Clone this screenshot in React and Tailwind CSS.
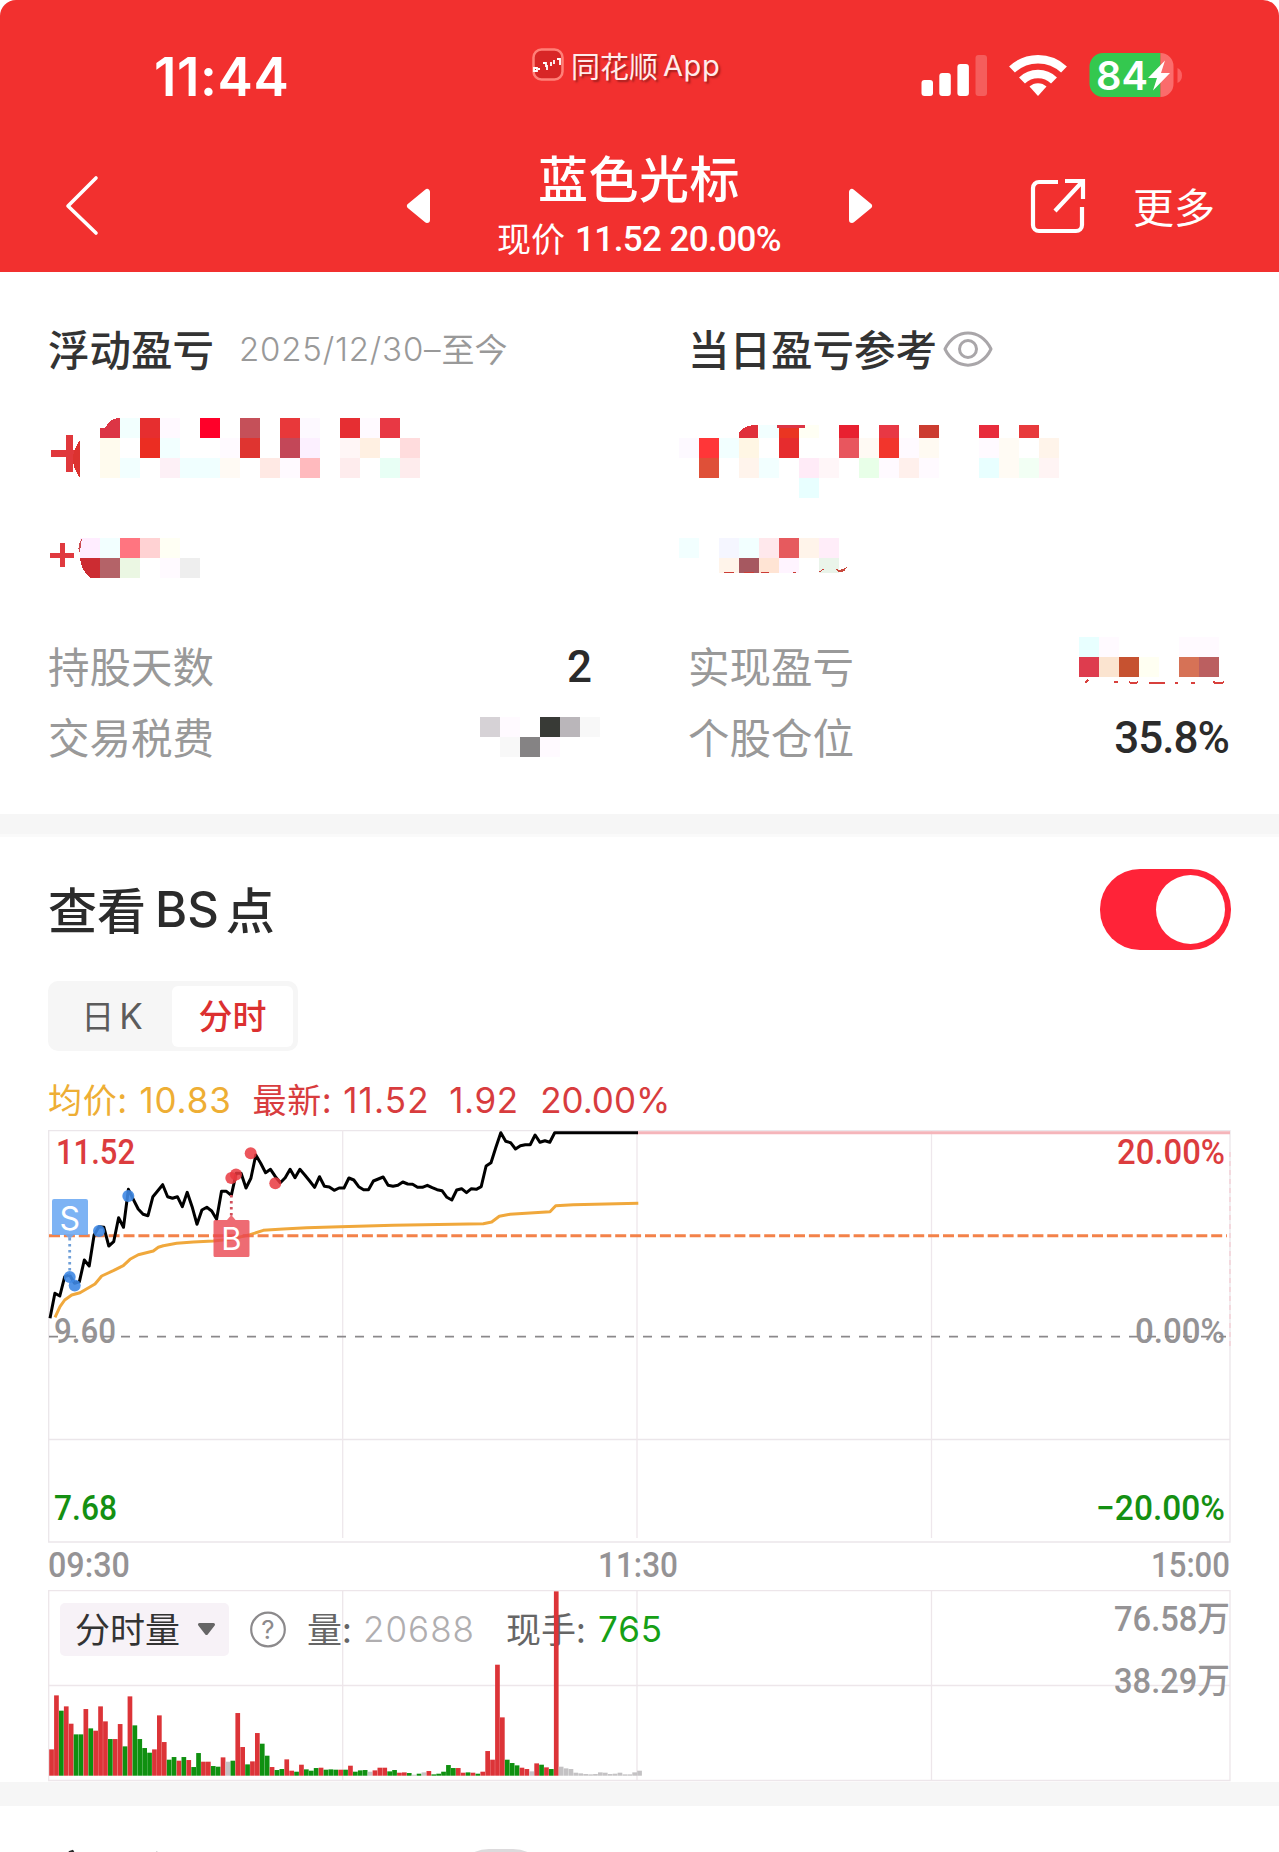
import { useState } from 'react'

const RED = '#dc3c3e'
const GREEN = '#149012'

// hidden amounts, one string of colours per 20px row ('-' leaves the cell empty)
const MASKS = {
  floatProfit: {
    left: 100,
    rows: [
      [0, 20, '- #f2fffe #e62e2f #fff9ff - #ff0029 - #c55059 - #e8383a #fdf9ff - #e62e32 #fffaff #e83844'],
      [20, 20, '#fffbee - #eb2d22 #f2ffff - - #fffaff #df3430 - #c34758 #fcf0ff - #fff6f6 #fff0e2 - #ffdcdd'],
      [40, 20, '#fffbee #f2ffff - #fdf0f6 #f0ffff #f0ffff #fffaf4 - #ffe9e4 #fffaff #ffbabe - #feeced - #e8fff5 #feeced'],
    ],
  },
  floatRate: {
    left: 80,
    rows: [
      [0, 20, '#ffedff #f2ffff #ff7580 #ffd2d3 #fffff4'],
      [20, 20, '- #b46368 #ebf7e3 - #fffaff #eeeeee'],
    ],
  },
  dayProfit: {
    left: 0,
    rows: [
      [7, 13, '- - - - #f2ffff #ea3522 #fffff4 - #e82030 - #e83844 - #cc3c30 - - #e82c3c - #e83a3c'],
      [20, 20, '#fdf9ff #ff3638 #f2ffff #fff6e4 - #e62c2e - - #e8565e #fffaf4 #f2352c #fffaff #fffaf2 - - #fffaff #fffbf4 - #fff4ea'],
      [40, 20, '- #df5038 - #fff4ec #f2ffff - #ffebf7 #fff6f8 - #e8ffe8 #fffaff #fff0ec #fffaff - - #e8ffff #fffbf4 #f2fff4 #fff4f4'],
      [60, 20, '- - - - - - #e8ffff'],
    ],
  },
  dayRate: {
    left: 0,
    rows: [
      [0, 20, '#f2ffff - #f5f6ff #f2ffff #ffe8ec #e65a5e #fff4ea #ffedf9'],
      [20, 15, '- - #fff4ea #a65860 #ffe4d4 #fff4ff - #eaf4ea'],
    ],
  },
  fee: {
    left: 0,
    rows: [
      [0, 20, '#d6d2d6 #fffaff - #383a36 #bab6ba #f8f8f8'],
      [20, 20, '- #f8f8f8 #858384 #fffaff'],
    ],
  },
  realized: {
    left: 0,
    rows: [
      [0, 20, '#e8ffff #fffaff - - - #fffaff #fffaff'],
      [20, 20, '#de3c4e #fbe4d0 #c65230 #fffff2 - #d67256 #bb5f60'],
    ],
  },
}

// one sample per minute, in thirds of a pixel
const PRICE = [
  625, 550, 558, 500, 495, 520, 515, 450, 468, 375, 350, 352, 408, 395, 323, 352, 238, 268, 297, 313,
  317, 260, 242, 224, 260, 265, 260, 290, 247, 290, 343, 300, 292, 303, 328, 244, 244, 256, 190, 190,
  234, 205, 135, 160, 188, 178, 200, 218, 203, 178, 203, 178, 195, 213, 232, 200, 229, 231, 241, 234,
  234, 204, 210, 230, 239, 239, 213, 207, 201, 226, 229, 226, 216, 222, 223, 232, 232, 226, 233, 239,
  242, 262, 270, 240, 236, 248, 236, 238, 230, 168, 158, 112, 68, 94, 98, 117, 107, 104, 104, 75,
  97, 92, 97, 68, 68, 68, 68, 68, 68, 68, 68, 68, 68, 68, 68, 68, 68, 68, 68, 68, 68,
]

const AVERAGE = [
  [75, 622], [90, 590], [104, 570], [125, 555], [150, 548], [195, 522], [215, 498], [250, 482], [280, 467],
  [300, 448], [325, 434], [370, 423], [385, 412], [400, 407], [440, 400], [490, 396], [550, 393], [600, 388],
  [660, 374], [700, 361], [760, 357], [830, 353], [930, 350], [1090, 346], [1360, 341], [1385, 336],
  [1408, 319], [1440, 313], [1560, 305], [1577, 287], [1630, 284], [1825, 280],
]

const VOLUME =
  'r79 r241 g195 r208 r156 g124 g124 r200 g142 r135 r208 r163 g110 r110 r155 g88 r238 g151 g110 g83 g69 r79 r181 r101 g48 g56 r45 g56 r47 g26 g68 r42 r42 g29 g27 r55 x42 g45 r188 r86 g34 r43 r128 g96 g60 r26 g17 g20 r49 r15 g12 r33 g19 g15 g23 r24 g18 g19 g18 r18 g18 r30 g12 g16 g17 x12 r16 r24 r24 g13 g17 r9 r10 g8 x3 g6 x10 r14 g4 g6 g12 g32 g23 r23 r9 g10 r9 g6 r12 r74 r48 r333 r175 g48 g38 g31 r24 r20 x13 r37 g33 r25 g20 r553 x27 x22 x20 x9 x7 x5 x4 x5 x10 x9 x5 x6 x9 x4 x4 x10 x15'
const BAR_COLORS = { r: '#dc3438', g: '#0f9010', x: '#c4c2c4' }

const px = (v) => v / 3 - 18
const py = (v) => v / 3 - 20

function Mosaic({ mask, width, height, className, children }) {
  return (
    <svg width={width} height={height} className={`block shrink-0 ${className || ''}`} shapeRendering="crispEdges">
      {mask.rows.map(([y, h, cells]) =>
        cells.split(' ').map((fill, i) =>
          fill === '-' ? null : (
            <rect key={`${y}-${i}`} x={mask.left + i * 20} y={y} width="20" height={h} fill={fill} />
          )
        )
      )}
      {children}
    </svg>
  )
}

function StatusBar() {
  return (
    <div className="flex h-[132px] items-start pl-[154px]">
      <div className="mt-[51px] w-[378px] font-['Inter'] text-[53px] leading-[52px] font-semibold tracking-[0.6px]">
        11:44
      </div>
      <div className="mt-[44px] flex w-[389px] items-center">
        <svg width="32" height="33" viewBox="0 0 32 33" fill="none" className="-mt-[2px]">
          <rect x="1.5" y="1.5" width="29" height="30" rx="8" fill="#d82626" stroke="#ff8078" strokeWidth="2.5" />
          <path d="M2 20h3v3H2zM6 21h2M11 15h3v4M15 17v5M19 14v4M22 12v4M25 11h3v6" stroke="#fff" strokeWidth="1.8" />
        </svg>
        <span className="ml-[7px] flex items-center leading-[40px] text-[#ffeceb] [text-shadow:2px_2px_2px_rgba(110,20,20,0.6)]">
          <span className="text-[29px]">同花顺</span>
          <span className="mt-[2px] ml-[5px] font-['Inter'] text-[29px] tracking-[0.6px]">App</span>
        </span>
      </div>
      <svg width="262" height="46" viewBox="921 52 262 46" className="mt-[52px] overflow-visible">
        <g fill="#fff">
          <rect x="921.5" y="80" width="11.5" height="16" rx="3" />
          <rect x="939.3" y="73" width="11.5" height="23" rx="3" />
          <rect x="957.4" y="64" width="11.5" height="32" rx="3" />
          <rect x="975.5" y="55" width="11.5" height="41" rx="3" opacity="0.22" />
        </g>
        <g fill="none" stroke="#fff" strokeWidth="8.5">
          <path d="M1012 69.500a38 38 0 0 1 52 0" />
          <path d="M1022 80.500a23 23 0 0 1 32 0" />
        </g>
        <path d="M1038 96l-8.500-9.500a12.500 12.500 0 0 1 17 0z" fill="#fff" />
        <path d="M1103 53H1160.500V97H1103a13.500 13.500 0 0 1-13.500-13.500V66.500A13.500 13.500 0 0 1 1103 53z" fill="#34c84f" />
        <path d="M1160.500 53a13 13 0 0 1 13 13.500v17a13 13 0 0 1-13 13.500z" fill="#fb6c6c" />
        <path d="M1177.500 68c6 2 6 13 0 15z" fill="#fb6060" />
        <text x="1096" y="90" fontFamily="Inter" fontWeight="600" fontSize="40" fill="#fff" textLength="52" lengthAdjust="spacingAndGlyphs">
          84
        </text>
        <path d="M1165 60.500l-17 17.500h9l-4 12.500 17-17.500h-9z" fill="#fff" />
      </svg>
    </div>
  )
}

function NavBar() {
  return (
    <div className="flex h-[140px] items-start pl-[63px]">
      <svg width="38" height="62" viewBox="0 0 38 62" className="mt-[43px]" fill="none">
        <path d="M33 3L5 31L33 58" stroke="#fff" strokeWidth="3.600" strokeLinecap="round" strokeLinejoin="round" />
      </svg>
      <svg width="26" height="36" viewBox="0 0 26 36" className="mt-[56px] ml-[305px]">
        <path d="M4 18L21 4V32Z" fill="#fff" stroke="#fff" strokeWidth="6" strokeLinejoin="round" />
      </svg>
      <div className="ml-[65px] flex w-[284px] flex-col items-center">
        <h1 className="mt-[12px] text-[50px] leading-[64px] font-medium tracking-[0.5px]">蓝色光标</h1>
        <p className="mt-[9px] flex h-[44px] items-center whitespace-nowrap">
          <span className="mb-[2px] text-[34px] leading-[44px]">现价</span>
          <span className="mt-[2px] ml-[10px] font-['Roboto'] text-[35px] leading-[44px] font-medium tracking-[-0.6px]">
            11.52 20.00%
          </span>
        </p>
      </div>
      <svg width="26" height="36" viewBox="0 0 26 36" className="mt-[56px] ml-[66px]">
        <path d="M22 18L5 4V32Z" fill="#fff" stroke="#fff" strokeWidth="6" strokeLinejoin="round" />
      </svg>
      <svg width="58" height="58" viewBox="0 0 58 58" className="mt-[45px] ml-[156px]" fill="none" stroke="#fff" strokeWidth="4.200">
        <path d="M29 5H10a6 6 0 0 0-6 6V48a6 6 0 0 0 6 6H47a6 6 0 0 0 6-6V30" />
        <path d="M36 4H54V22M53 5L26 34" />
      </svg>
      <span className="mt-[45px] ml-[46px] text-[41px] leading-[56px]">更多</span>
    </div>
  )
}

function Summary() {
  return (
    <section className="flex h-[542px] bg-white pt-[48px]">
      <div className="w-[688px] pl-[48px]">
        <div className="flex h-[56px] items-center">
          <h2 className="text-[41.500px] leading-[56px] font-medium text-[#333]">浮动盈亏</h2>
          <span className="ml-[25px] flex items-center text-[#999]">
            <span className="mt-[2px] font-['Inter'] text-[33px] leading-[54px] font-light tracking-[0.8px]">2025/12/30–</span>
            <span className="text-[33px] leading-[56px]">至今</span>
          </span>
        </div>
        <Mosaic mask={MASKS.floatProfit} width={440} height={80} className="mt-[42px] -ml-[48px]">
          <path d="M100 20v-10h5q5-10 15-10v20z" fill="#dc3545" />
          <path d="M51 32h15v-15h7v15h2v7h-2v15h-7v-15h-15z" fill="#e0383c" />
          <path d="M80 22v38q-14-19 0-38z" fill="#dc322f" />
        </Mosaic>
        <Mosaic mask={MASKS.floatRate} width={240} height={40} className="mt-[40px] -ml-[48px]">
          <path d="M50 15h10v-10h4.500v10h9.500v5h-9.500v9h-4.500v-9h-10z" fill="#e03a3f" />
          <path d="M82 0q-5 7-3 14h1z" fill="#cc4c50" />
          <path d="M80 20h20v20h-10q-9-8-10-20z" fill="#cc2c32" />
        </Mosaic>
        <div className="mt-[59px] flex h-[56px] w-[544px] items-center justify-between">
          <span className="text-[41.500px] leading-[56px] text-[#999]">持股天数</span>
          <span className="mt-[4px] font-['Roboto'] text-[44px] leading-[52px] font-medium text-[#2b2b2b]">2</span>
        </div>
        <div className="mt-[15px] flex h-[56px] items-center">
          <span className="w-[432px] text-[41.500px] leading-[56px] text-[#999]">交易税费</span>
          <Mosaic mask={MASKS.fee} width={120} height={40} className="mt-[2px]" />
        </div>
      </div>

      <div className="flex-1">
        <div className="flex h-[56px] items-center">
          <h2 className="text-[41.500px] leading-[56px] font-medium text-[#333]">当日盈亏参考</h2>
          <svg width="52" height="40" viewBox="0 0 52 40" className="mt-[2px] ml-[5px]" fill="none" stroke="#a9a6a9" strokeWidth="3">
            <path d="M3 20C13 -1.500 39 -1.500 49 20C39 41.500 13 41.500 3 20Z" strokeLinejoin="round" />
            <circle cx="26" cy="20" r="8.500" />
          </svg>
        </div>
        <Mosaic mask={MASKS.dayProfit} width={400} height={80} className="mt-[42px] -ml-[9px]">
          <path d="M60 20v-6q5-7 19-7v13z" fill="#e0303a" />
          <path d="M98 7h28v3h-28z" fill="#dc3545" />
        </Mosaic>
        <Mosaic mask={MASKS.dayRate} width={200} height={40} className="mt-[40px] -ml-[9px]">
          <path d="M45 34h10M65 34h10M82 34h8M114 34h3M140 34l5-3" stroke="#cc3c35" strokeWidth="1" fill="none" />
          <path d="M155 30q7 4 13-1q-4 8-10 4z" fill="#c8483c" />
        </Mosaic>
        <div className="mt-[59px] flex h-[56px] items-center">
          <span className="w-[391px] text-[41.500px] leading-[56px] text-[#999]">实现盈亏</span>
          <Mosaic mask={MASKS.realized} width={150} height={48} className="-mt-[8px]">
            <path d="M6 46l3-3M35 45h4M50 45q5 3 9 0M70 46h16M96 46h3M112 46h4M134 45q6 3 11 0" stroke="#d8403c" strokeWidth="2" fill="none" />
          </Mosaic>
        </div>
        <div className="mt-[15px] flex h-[56px] w-[541px] items-center justify-between">
          <span className="text-[41.500px] leading-[56px] text-[#999]">个股仓位</span>
          <span className="mt-[4px] font-['Roboto'] text-[44px] leading-[52px] font-medium tracking-[-1px] text-[#2b2b2b]">35.8%</span>
        </div>
      </div>
    </section>
  )
}

function Toggle({ on, onChange }) {
  return (
    <button
      onClick={() => onChange(!on)}
      className={`flex h-[81px] w-[131px] items-center rounded-[40px] px-[6px] ${
        on ? 'justify-end bg-[#ff2338]' : 'justify-start bg-[#ddd]'
      }`}
    >
      <span className="h-[69px] w-[69px] rounded-full bg-white" />
    </button>
  )
}

function Label({ x, y, w, fill, end, children }) {
  return (
    <text
      x={x}
      y={y}
      fill={fill}
      fontFamily="Roboto, 'Noto Sans CJK SC', sans-serif"
      fontSize="35"
      fontWeight="500"
      textAnchor={end ? 'end' : 'start'}
      textLength={w}
      lengthAdjust="spacingAndGlyphs"
    >
      {children}
    </text>
  )
}

function PriceChart() {
  const line = PRICE.map((v, i) => `${(2 + i * 4.9).toFixed(1)},${py(v).toFixed(1)}`).join(' ')
  const average = AVERAGE.map(([x, y]) => `${px(x).toFixed(1)},${py(y).toFixed(1)}`).join(' ')
  return (
    <svg width="1184" height="460" viewBox="0 0 1184 460" className="block overflow-visible" fill="none">
      <g stroke="#ebe6ea" strokeWidth="1.300">
        <path d="M0.700 0.700H1182V412H0.700ZM0 309.500H1182" />
        <path d="M294.700 0V408M589 0V408M883.500 0V408" stroke="#eee7ec" />
      </g>
      <path d="M1182 22V220" stroke="#f3cdd5" strokeWidth="1.300" strokeDasharray="5 4" />
      <Label x="6" y="213" w="62" fill="#959395">9.60</Label>
      <Label x="1177" y="213" w="90" fill="#959395" end>0.00%</Label>
      <path d="M1 206.700H1178" stroke="#8b898b" strokeWidth="1.800" strokeDasharray="9 9" />
      <path d="M589 2.700H1182" stroke="#f5b5ba" strokeWidth="3" />
      <polyline points={average} stroke="#f0a83c" strokeWidth="3" strokeLinejoin="round" />
      <path d="M1 105.800H1179" stroke="#f3824a" strokeWidth="3" strokeDasharray="11 3.900" />
      <polyline points={line} stroke="#000" strokeWidth="3" strokeLinejoin="round" />

      <path d="M21.700 108V145" stroke="#6f9fd8" strokeWidth="2.800" strokeDasharray="2.500 3.500" />
      <path d="M183.300 65V87" stroke="#d0505c" strokeWidth="2.800" strokeDasharray="2.500 3.500" />
      <g fill="#3f88e4" fillOpacity="0.9">
        <circle cx="21.700" cy="147" r="6" />
        <circle cx="26.700" cy="155.500" r="6" />
        <circle cx="51" cy="101" r="6" />
        <circle cx="80.300" cy="66" r="6" />
      </g>
      <g fill="#e93840" fillOpacity="0.85">
        <circle cx="183.300" cy="48" r="6" />
        <circle cx="188" cy="44.500" r="6" />
        <circle cx="202.700" cy="23.300" r="6" />
        <circle cx="227.300" cy="53.300" r="6" />
      </g>
      <path d="M6 69h32a2 2 0 0 1 2 2v34H26l-4.300 4-4.300-4H4V71a2 2 0 0 1 2-2z" fill="#6ba8f2" fillOpacity="0.88" />
      <text x="21.800" y="99.500" fill="#fff" fontFamily="Inter" fontSize="32" textAnchor="middle">S</text>
      <path d="M167 90h12l4.300-5 4.300 5h12.400a1.500 1.500 0 0 1 1.500 1.500v34a1.500 1.500 0 0 1-1.500 1.500h-33a1.500 1.500 0 0 1-1.500-1.500v-34a1.500 1.500 0 0 1 1.500-1.500z" fill="#ea4650" fillOpacity="0.8" />
      <text x="183.500" y="119.500" fill="#fff" fontFamily="Inter" fontSize="31" textAnchor="middle">B</text>

      <Label x="8" y="34" w="79" fill={RED}>11.52</Label>
      <Label x="1177" y="34" w="108" fill={RED} end>20.00%</Label>
      <Label x="6" y="390" w="63" fill={GREEN}>7.68</Label>
      <Label x="1177" y="390" w="129" fill={GREEN} end>−20.00%</Label>
      <Label x="0" y="447" w="82" fill="#959395">09:30</Label>
      <Label x="550" y="447" w="80" fill="#959395">11:30</Label>
      <Label x="1182" y="447" w="79" fill="#959395" end>15:00</Label>
    </svg>
  )
}

function VolumeChart() {
  return (
    <svg width="1184" height="192" viewBox="0 0 1184 192" className="block overflow-visible">
      <path
        d="M0.700 0.700H1182V190.500H0.700ZM0 95.500H1182M294.700 0V191M589 0V191M883.500 0V191"
        stroke="#ede6ea"
        strokeWidth="1.300"
        fill="none"
      />
      <Label x="1182" y="41" w="116" fill="#959395" end>76.58万</Label>
      <Label x="1182" y="103" w="116" fill="#959395" end>38.29万</Label>

      <rect x="12" y="13" width="169" height="53" rx="5" fill="#f7f2f7" />
      <g fontFamily="'Noto Sans CJK SC', sans-serif" fontSize="35" fill="#666">
        <text x="27" y="53" fill="#333">分时量</text>
        <text x="259" y="53">量:</text>
        <text x="458" y="53">现手:</text>
      </g>
      <path d="M151.500 34.500h14l-7 9z" fill="#666" stroke="#666" strokeWidth="3" strokeLinejoin="round" />
      <circle cx="220" cy="39.500" r="16.800" fill="none" stroke="#8c8a8c" strokeWidth="2.200" />
      <g fontFamily="Inter">
        <text x="220" y="49" fontSize="26" fill="#8c8a8c" textAnchor="middle">?</text>
        <text x="315" y="51.500" fontSize="35" fontWeight="300" fill="#b0aeb0" textLength="111">20688</text>
        <text x="550" y="51.500" fontSize="35" fill="#16a016" textLength="64">765</text>
      </g>

      {VOLUME.split(' ').map((bar, i) => {
        const h = Number(bar.slice(1)) / 3
        return (
          <rect key={i} x={1.2 + i * 4.9} y={185.7 - h} width="4.700" height={h} fill={BAR_COLORS[bar[0]]} />
        )
      })}
    </svg>
  )
}

function BsSection() {
  const [showPoints, setShowPoints] = useState(true)
  return (
    <section className="h-[945px] bg-white px-[48px]">
      <div className="flex h-[144px] items-center justify-between">
        <h2 className="-mt-[3px] flex items-center text-[49px] leading-[64px] font-medium text-[#2b2b2b]">
          查看
          <span className="mt-[4px] mr-[7px] ml-[9px] font-['Inter'] text-[49px]">BS</span>
          点
        </h2>
        <Toggle on={showPoints} onChange={setShowPoints} />
      </div>
      <div className="flex h-[70px] w-[250px] items-center rounded-[10px] bg-[#f6f6f6] p-[4px]">
        <button className="flex h-[61px] w-[120px] items-center justify-center text-[33px] text-[#5c5c5c]">
          日<span className="ml-[5px] font-['Inter'] text-[35px]">K</span>
        </button>
        <button className="h-[61px] w-[121px] rounded-[6px] bg-white pb-[3px] text-[34px] font-medium text-[#dc3030]">分时</button>
      </div>
      <div className="mt-[23px] flex h-[52px] items-center text-[34px] leading-[52px] whitespace-nowrap text-[#d83c3e]">
        <span className="mb-[2px] tracking-[0.7px] text-[#eeae34]">均价:</span>
        <span className="ml-[12px] w-[113px] font-['Inter'] text-[35px] tracking-[0.8px] text-[#eeae34]">10.83</span>
        <span className="mb-[2px] tracking-[0.7px]">最新:</span>
        <span className="ml-[11px] w-[106px] font-['Inter'] text-[35px] tracking-[1.2px]">11.52</span>
        <span className="w-[91px] font-['Inter'] text-[35px] tracking-[0.6px]">1.92</span>
        <span className="font-['Inter'] text-[35px]">20.00%</span>
      </div>
      <div className="mt-[4px]">
        <PriceChart />
        <VolumeChart />
      </div>
    </section>
  )
}

export default function App() {
  const cjk = "font-['Noto_Sans_CJK_SC',sans-serif]"
  return (
    <div className={`h-[1852px] w-[1279px] overflow-hidden bg-white ${cjk}`}>
      <header className="h-[272px] rounded-t-[16px] bg-[#f2302f] text-white">
        <StatusBar />
        <NavBar />
      </header>
      <Summary />
      <div className="h-[23px] border-b-[3px] border-[#fafafa] bg-[#f6f6f6]" />
      <BsSection />
      <div className="h-[24px] bg-[#f6f6f6]" />
      <section className="flex h-[46px] items-start overflow-hidden bg-white pl-[48px]">
        <h2 className="mt-[28px] w-[403px] shrink-0 text-[50px] leading-[74px] font-medium text-[#2b2b2b]">交易记录</h2>
        <span className="mt-[43px] h-[76px] w-[100px] shrink-0 rounded-full bg-[#dcdadc]" />
      </section>
    </div>
  )
}
